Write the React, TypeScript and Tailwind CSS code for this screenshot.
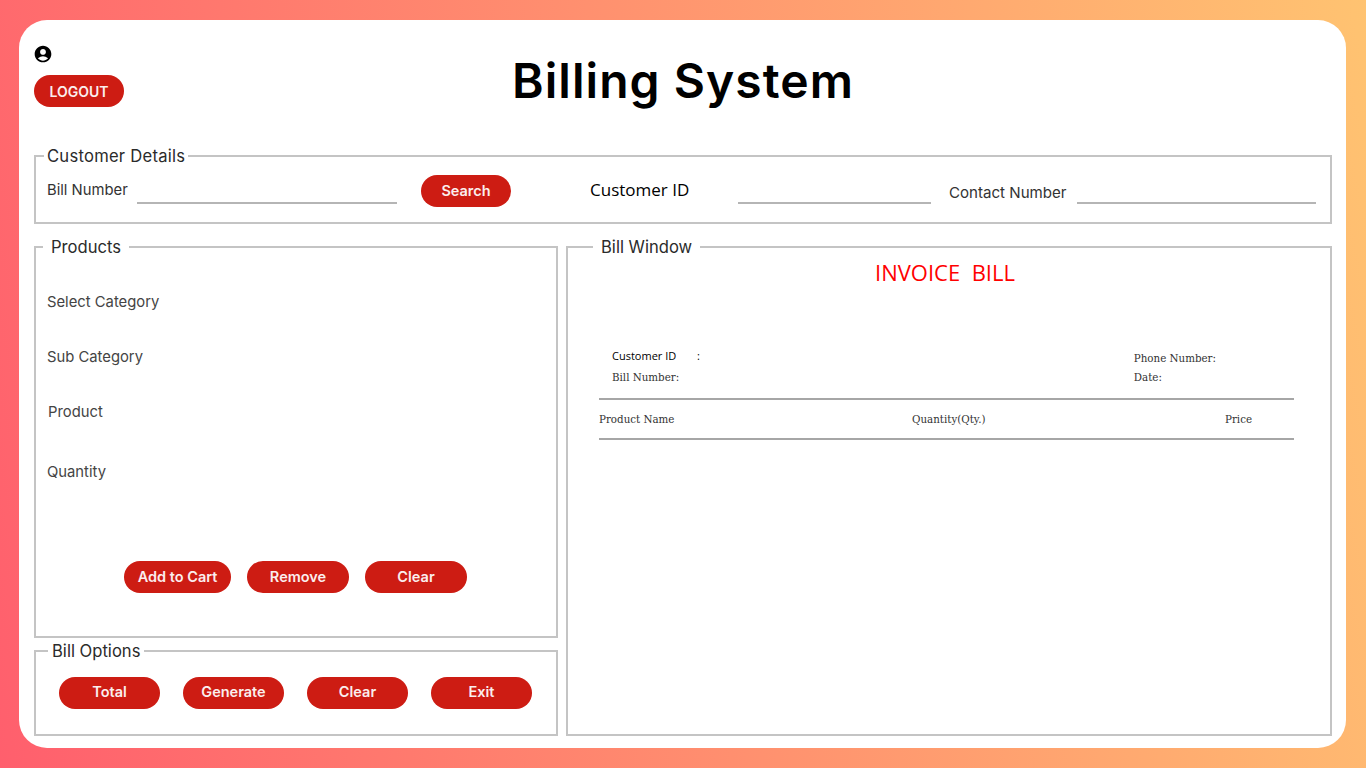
import { MdAccountCircle } from "react-icons/md";

const poppins = "font-['Inter','Noto_Sans',sans-serif]";

function PillButton({ label, className }: { label: string; className: string }) {
  return (
    <button className={`h-8 rounded-full bg-[#cd1c13] text-[14.5px] font-semibold text-[#fbeeee] ${poppins} ${className}`}>
      {label}
    </button>
  );
}

function Panel({ title, className, legendClass, children }: { title: string; className: string; legendClass: string; children: React.ReactNode }) {
  return (
    <fieldset className={`border-2 border-[#c4c4c4] ${className}`}>
      <legend className={`pt-[1px] text-[16.6px] leading-[21px] text-[#2b2b2b] ${poppins} ${legendClass}`}>{title}</legend>
      {children}
    </fieldset>
  );
}

export default function App() {
  const labels = [
    { text: "Select Category", cls: "ml-[11px] mt-[33px]" },
    { text: "Sub Category", cls: "ml-[11px] mt-[33px]" },
    { text: "Product", cls: "ml-[12px] mt-[33px]" },
    { text: "Quantity", cls: "ml-[11px] mt-[38px]" },
  ];

  return (
    <div className="h-[768px] w-full overflow-hidden bg-[linear-gradient(78deg,#ff5f6d,#ffc371)] pb-[20px] pl-[19px] pr-[20px] pt-[20px]">
      <div className="flex h-[728px] flex-col rounded-[28px] bg-white pl-[15px] pr-[14px] pt-[24px]">
        {/* header */}
        <div className="grid h-[101px] shrink-0 grid-cols-[1fr_auto_1fr]">
          <div className="flex flex-col items-start">
            <MdAccountCircle className="text-[20px] text-black -ml-[1px]" />
            <button className={`mt-[11px] h-8 w-[90px] rounded-full bg-[#cd1c13] text-[14px] font-semibold text-[#fbeeee] ${poppins}`}>
              LOGOUT
            </button>
          </div>
          <h1 className={`pt-[8px] text-[48px] font-semibold leading-[58px] tracking-[1.05px] text-black ${poppins}`}>Billing System</h1>
          <div />
        </div>

        {/* customer details */}
        <Panel title="Customer Details" className="h-[79px] shrink-0" legendClass="ml-[8px] px-[3px] tracking-[0.25px]">
          <div className="flex items-end pl-[11px] pt-[8px] text-[14.8px] text-[#333333]">
            <span className={`w-[90px] pb-[3px] ${poppins}`}>Bill Number</span>
            <input className="h-[24px] w-[260px] border-b-2 border-[#b5b5b5]" />
            <PillButton label="Search" className="mb-[-3px] ml-[24px] w-[90px]" />
            <span className="ml-[79px] w-[148px] pb-[2px] font-['Open_Sans',sans-serif] text-[17px] text-black">Customer ID</span>
            <input className="h-[24px] w-[193px] border-b-2 border-[#b5b5b5]" />
            <span className={`mb-[-1px] ml-[18px] w-[128px] text-[15.1px] ${poppins}`}>Contact Number</span>
            <input className="h-[24px] w-[239px] border-b-2 border-[#b5b5b5]" />
          </div>
        </Panel>

        <div className="mt-[12px] grid min-h-0 grid-cols-[524px_1fr] gap-x-[8px]">
          <div className="flex flex-col gap-y-[2px]">
            {/* products */}
            <Panel title="Products" className="h-[402px]" legendClass="ml-[7px] px-[8px]">
              <div className="flex flex-col">
                {labels.map((l) => (
                  <span key={l.text} className={`text-[14.8px] leading-[22px] text-[#444444] ${poppins} ${l.cls}`}>
                    {l.text}
                  </span>
                ))}
              </div>
              <div className="mt-[78px] flex gap-x-[16px] pl-[88px]">
                <PillButton label="Add to Cart" className="w-[107px]" />
                <PillButton label="Remove" className="w-[102px]" />
                <PillButton label="Clear" className="w-[102px]" />
              </div>
            </Panel>

            {/* bill options */}
            <Panel title="Bill Options" className="h-[96px]" legendClass="ml-[12px] px-[4px]">
              <div className="flex gap-x-[23px] pl-[23px] pt-[15px]">
                <PillButton label="Total" className="w-[101px] pb-[2px]" />
                <PillButton label="Generate" className="w-[101px] pb-[2px]" />
                <PillButton label="Clear" className="w-[101px] pb-[2px]" />
                <PillButton label="Exit" className="w-[101px] pb-[2px]" />
              </div>
            </Panel>
          </div>

          {/* bill window */}
          <Panel title="Bill Window" className="h-[500px]" legendClass="ml-[25px] px-[8px]">
            <p className="pr-[8px] text-center font-['Open_Sans',sans-serif] text-[22px] leading-[28px] text-[#ff0000]">
              INVOICE&nbsp; BILL
            </p>
            <div className="mt-[60px] pl-[31px] pr-[36px]">
              <div className="flex justify-between pl-[13px] pr-[78px] text-[10.3px] text-[#333333]">
                <div className="flex flex-col">
                  <div className="flex h-[21px] items-center font-['Open_Sans',sans-serif] text-[11px] text-black">
                    <span className="w-[85px]">Customer ID</span>
                    <span>:</span>
                  </div>
                  <span className="font-['DejaVu_Serif',serif] leading-[21px]">Bill Number:</span>
                </div>
                <div className="flex flex-col pt-[2px] font-['DejaVu_Serif',serif]">
                  <span className="leading-[21px]">Phone Number:</span>
                  <span className="leading-[17px]">Date:</span>
                </div>
              </div>
              <div className="mt-[10px] flex h-[42px] items-center border-y-2 border-[#a6a6a6] pr-[42px] pt-[2px] font-['DejaVu_Serif',serif] text-[10.3px] text-[#333333]">
                <span className="w-[313px]">Product Name</span>
                <span className="flex-1">Quantity(Qty.)</span>
                <span>Price</span>
              </div>
            </div>
          </Panel>
        </div>
      </div>
    </div>
  );
}
